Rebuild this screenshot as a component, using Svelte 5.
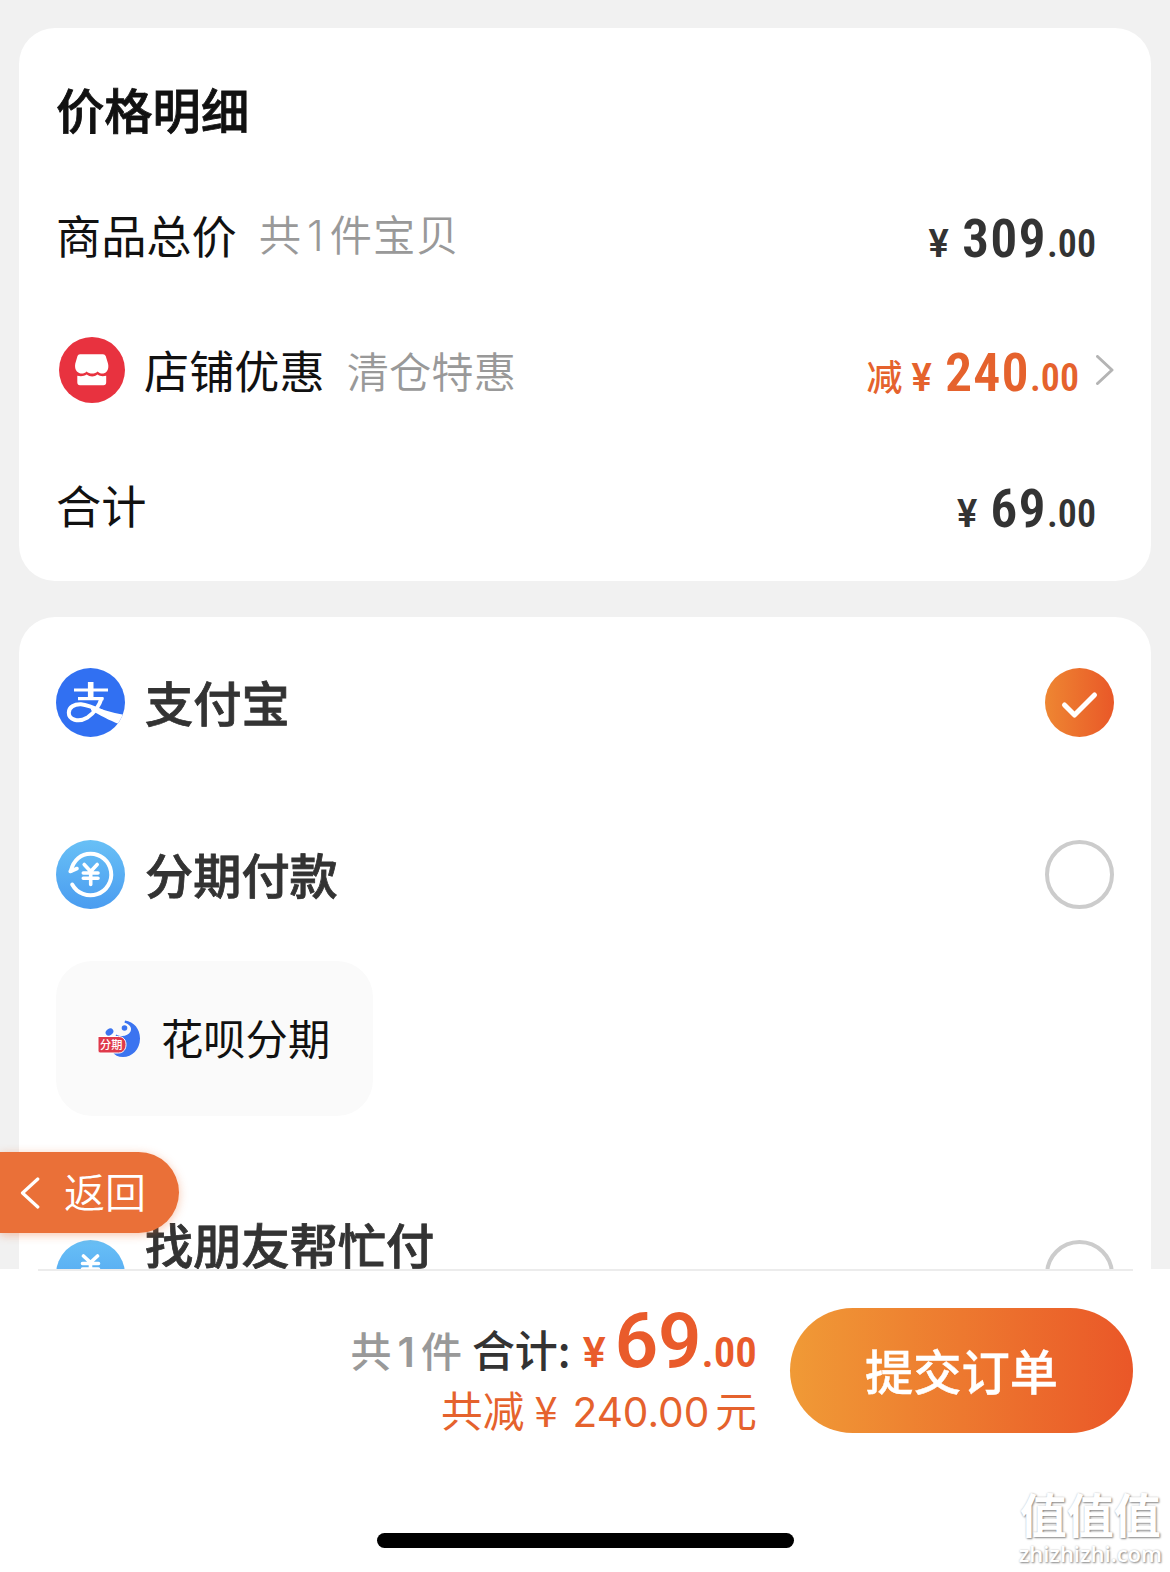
<script>
  let selected = $state("alipay");

  const methods = [
    { id: "alipay", name: "支付宝" },
    { id: "installment", name: "分期付款" },
    { id: "friend", name: "找朋友帮忙付" },
  ];
</script>

{#snippet price(whole, cents)}
  <span class="yen">¥</span><span class="whole">{whole}</span><span class="cents">.{cents}</span>
{/snippet}

{#snippet coin(loop)}
  <svg class="logo" viewBox="0 0 69 69">
    <defs>
      <linearGradient id="sky" x1="0" y1="0" x2="0" y2="1">
        <stop offset="0" stop-color="#68c0f6" />
        <stop offset="1" stop-color="#4a9cf0" />
      </linearGradient>
    </defs>
    <circle cx="34.5" cy="34.5" r="34.5" fill="url(#sky)" />
    <g fill="none" stroke="#fff" stroke-width="3.6" stroke-linecap="round" stroke-linejoin="round">
      {#if loop}
        <path stroke-width="4" d="M15 30.5C17.5 20 25 13.7 34.5 13.7A20.8 20.8 0 1 1 16.2 44.5" />
        <path d="M14.2 31.5L21 28.5" />
        <path d="M28.2 24.5L34.7 31.5L41.2 24.5M27.3 33H42M27.3 38.3H42M34.7 32V44.5" />
      {:else}
        <path d="M27.5 16L34.5 22.5L41.5 16M26.5 23.5H42.5M26.5 29H42.5M34.5 23V38" />
      {/if}
    </g>
  </svg>
{/snippet}

<div class="page">
  <section class="card detail">
    <h2>价格明细</h2>
    <div class="row">
      <span class="label">商品总价</span>
      <span class="hint wide">共<span class="one">1</span>件宝贝</span>
      <span class="price">{@render price("309", "00")}</span>
    </div>
    <div class="row">
      <svg class="shop" viewBox="0 0 66 66">
        <circle cx="33" cy="33" r="33" fill="#e8323f" />
        <path
          fill="#fff"
          d="M21 17.2H44Q46 17.2 46.7 19L49 26.5C50.3 32 47.8 36 44.5 36.4C42 36.8 40 35.7 38.5 34.4C36 37.2 30.5 37.2 27.6 34.4C26 36 23.8 36.8 21.5 36.4C17.8 35.8 15.2 32 16.3 26.5L18.5 19Q19 17.2 21 17.2Z"
        />
        <path
          fill="#fff"
          d="M18.3 38.7C21 39.4 25 39.5 27.6 37.5C31 40 35.5 40 38.5 37.5C41 39.4 44 39.5 47.2 38.7V45.3Q47.2 48.2 44.5 48.2H21Q18.3 48.2 18.3 45.3Z"
        />
      </svg>
      <span class="label">店铺优惠</span>
      <span class="hint">清仓特惠</span>
      <span class="price off"><span class="minus">减</span>{@render price("240", "00")}</span>
      <svg class="arrow" viewBox="0 0 18 30">
        <path d="M1.5 1.5L16 15L1.5 28.5" fill="none" stroke="#b4b4b4" stroke-width="3" stroke-linecap="round" stroke-linejoin="round" />
      </svg>
    </div>
    <div class="row">
      <span class="label">合计</span>
      <span class="price">{@render price("69", "00")}</span>
    </div>
  </section>

  <section class="card methods">
    {#each methods as method}
      <button class="method {method.id}" onclick={() => (selected = method.id)}>
        {#if method.id === "alipay"}
          <svg class="logo" viewBox="0 0 69 69">
            <defs>
              <clipPath id="disc"><circle cx="34.5" cy="34.5" r="34.5" /></clipPath>
            </defs>
            <circle cx="34.5" cy="34.5" r="34.5" fill="#3170f2" />
            <g clip-path="url(#disc)" fill="none" stroke="#fff">
              <path stroke-width="3.2" d="M18 22H52M22 30.6H47.5" />
              <path stroke-width="5.6" d="M34.7 14V30" />
              <path stroke-width="4" d="M45.8 29.5C43.5 37.5 39 44.5 31 49.8C22 55 12.8 51.5 12.8 44.7C12.8 39 18.5 36 25 36.3C32 36.9 38.5 40 47 44" />
              <path fill="#fff" stroke="none" d="M35 37.4C43 40.4 55 44.5 69 47L63 56C54 52.6 43 46.8 35 42.2Z" />
            </g>
          </svg>
        {:else}
          {@render coin(method.id === "installment")}
        {/if}
        <span class="name">{method.name}</span>
        {#if selected === method.id}
          <svg class="tick" viewBox="0 0 69 69">
            <defs>
              <linearGradient id="warm">
                <stop offset="0" stop-color="#ee8632" />
                <stop offset="1" stop-color="#e95828" />
              </linearGradient>
            </defs>
            <circle cx="34.5" cy="34.5" r="34.5" fill="url(#warm)" />
            <path d="M19.5 37L29.5 47L49.5 27" fill="none" stroke="#fff" stroke-width="5" stroke-linecap="round" stroke-linejoin="round" />
          </svg>
        {:else}
          <span class="radio"></span>
        {/if}
      </button>
      {#if method.id === "installment"}
        <div class="chip">
          <svg class="huabei" viewBox="0 0 43 38">
            <path
              fill="#3b74f0"
              d="M27 0.5C36 1.5 42 9 42 18.5C42 29.5 34 37 25 37C20 37 16.5 35 14.5 32L18 14.5C24 17.5 30 16 32.5 11.5C34.5 7.5 31 4 26.5 2.8Z"
            />
            <ellipse cx="11.5" cy="12" rx="4.2" ry="3.2" transform="rotate(-38 11.5 12)" fill="#3b74f0" />
            <circle cx="26.5" cy="8" r="2.8" fill="#3b74f0" />
            <path d="M0 16.5H20.5C25.2 16.5 28 20 28 24.5C28 29 25.5 33 20.5 33H2Q0 33 0 31Z" fill="#df3a4b" stroke="#fff" stroke-width="1" />
            <text x="2" y="29" font-size="11.2" font-weight="500" fill="#fff">分期</text>
          </svg>
          <span>花呗分期</span>
        </div>
      {/if}
    {/each}
  </section>

  <button class="back">
    <svg viewBox="0 0 20 32">
      <path d="M17.8 2L2.5 16L17.8 30" fill="none" stroke="#fff" stroke-width="3.2" stroke-linecap="round" stroke-linejoin="round" />
    </svg>
    <span>返回</span>
  </button>

  <footer>
    <div class="bar">
      <div class="summary">
        <p class="total">
          <span class="count">共<span class="one">1</span>件</span>
          <span class="sum">合计:</span>
          <span class="pay">{@render price("69", "00")}</span>
        </p>
        <p class="saved">共减<span class="y">¥</span><span class="num">240.00</span>元</p>
      </div>
      <button class="submit">提交订单</button>
    </div>
    <div class="home"></div>
    <div class="watermark">
      <b>值值值</b>
      <span>zhizhizhi.com</span>
    </div>
  </footer>
</div>

<style>
  :global(body) {
    background: #f1f1f1;
  }

  * {
    box-sizing: border-box;
  }

  .page {
    position: relative;
    display: flex;
    flex-direction: column;
    gap: 36px;
    width: 1170px;
    height: 1572px;
    padding: 28px 19px 0 19px;
    overflow: hidden;
    background: #f1f1f1;
    color: #111;
    font-family: "Noto Sans CJK SC", sans-serif;
  }

  button {
    padding: 0;
    border: 0;
    background: none;
    color: inherit;
    font: inherit;
    text-align: left;
  }

  h2,
  p {
    margin: 0;
  }

  .card {
    flex: none;
    padding: 0 37px;
    border-radius: 36px;
    background: #fff;
  }

  .detail {
    height: 553px;
  }

  h2 {
    height: 139px;
    padding-top: 20px;
    font-size: 48.3px;
    font-weight: 500;
    line-height: 120px;
    -webkit-text-stroke: 0.8px;
  }

  .row {
    display: flex;
    align-items: center;
    height: 135px;
  }

  .label {
    font-size: 45.2px;
    line-height: 66px;
  }

  .hint {
    margin-left: 22px;
    color: #999;
    font-size: 42.3px;
    font-weight: 350;
    line-height: 66px;
  }

  .hint.wide {
    letter-spacing: 1px;
  }

  .one {
    margin: 0 5px;
    font-family: Inter, sans-serif;
  }

  .shop {
    width: 66px;
    height: 66px;
    margin: 0 19px 0 3px;
  }

  .price {
    display: flex;
    align-items: baseline;
    margin-top: 13px;
    margin-left: auto;
    margin-right: 18px;
    color: #333;
    font-family: Roboto, "Noto Sans CJK SC", sans-serif;
    font-stretch: 87%;
    font-weight: 650;
    line-height: 66px;
  }

  .price .yen {
    margin-right: 13px;
    font-size: 38px;
    font-stretch: 100%;
    font-weight: 600;
  }

  .price .whole {
    font-size: 54px;
    letter-spacing: 1.2px;
  }

  .price .cents {
    font-size: 38px;
  }

  .off {
    margin-right: 17px;
    color: #e5622d;
  }

  .minus {
    margin-right: 9px;
    font-size: 36px;
    font-weight: 500;
  }

  .arrow {
    width: 18px;
    height: 30px;
  }

  .methods {
    height: 700px;
  }

  .method {
    display: flex;
    align-items: center;
    width: 100%;
    height: 172px;
    padding-bottom: 2px;
  }

  .logo {
    flex: none;
    width: 69px;
    height: 69px;
  }

  .name {
    margin-left: 20px;
    padding-bottom: 3px;
    color: #333;
    font-size: 48.2px;
    font-weight: 500;
    line-height: 70px;
    -webkit-text-stroke: 0.8px;
  }

  .tick,
  .radio {
    flex: none;
    width: 69px;
    height: 69px;
    margin-left: auto;
  }

  .radio {
    border: 4px solid #ccc;
    border-radius: 50%;
  }

  .friend {
    height: 317px;
    padding-bottom: 0;
  }

  .friend .name {
    align-self: flex-start;
    margin-top: 92px;
  }

  .chip {
    display: flex;
    align-items: center;
    width: 317px;
    height: 155px;
    padding-left: 42px;
    border-radius: 36px;
    background: #fafafa;
    font-size: 42.3px;
  }

  .chip span {
    padding-bottom: 5px;
  }

  .huabei {
    width: 43px;
    height: 38px;
    margin-right: 20px;
    overflow: visible;
  }

  .back {
    position: absolute;
    top: 1152px;
    left: 0;
    display: flex;
    align-items: center;
    width: 179px;
    height: 81px;
    padding-left: 20px;
    border-radius: 0 41px 41px 0;
    background: #ea7038;
    box-shadow: 0 2px 10px rgba(234, 112, 56, 0.4);
    color: #fff;
    font-size: 41px;
    font-weight: 350;
    line-height: 77px;
  }

  .back span {
    padding-bottom: 4px;
  }

  .back svg {
    width: 20px;
    height: 32px;
    margin-right: 24px;
  }

  footer {
    position: absolute;
    right: 0;
    bottom: 0;
    left: 0;
    height: 303px;
    background: #fff;
  }

  .bar {
    display: flex;
    justify-content: flex-end;
    height: 164px;
    margin: 0 37px 0 38px;
    padding-top: 37px;
    border-top: 2px solid #ececec;
  }

  .summary {
    display: flex;
    flex-direction: column;
    align-items: flex-end;
    margin-top: -3px;
    margin-right: 33px;
  }

  .total {
    display: flex;
    align-items: baseline;
    height: 74px;
    line-height: 72px;
  }

  .count {
    margin-right: 10px;
    color: #999;
    font-size: 41px;
    font-weight: 500;
  }

  .count .one {
    margin: 0 6px;
    font-weight: 600;
  }

  .sum {
    margin-right: 12px;
    color: #333;
    font-size: 43px;
    font-weight: 500;
  }

  .pay {
    display: flex;
    align-items: baseline;
    color: #e95b2b;
    font-family: Roboto, sans-serif;
    font-stretch: 90%;
    font-weight: 650;
  }

  .pay .yen {
    margin-right: 9px;
    font-size: 43px;
    font-stretch: 100%;
    font-weight: 600;
  }

  .pay .whole {
    font-size: 76px;
  }

  .pay .cents {
    font-size: 43px;
    font-stretch: 84%;
  }

  .saved {
    display: flex;
    align-items: baseline;
    color: #e5622d;
    font-size: 41.7px;
    line-height: 60px;
  }

  .saved .y {
    margin: 0 15px 0 10px;
  }

  .saved .num {
    margin-right: 6px;
    font-family: Inter, sans-serif;
    font-size: 40.6px;
  }

  .submit {
    width: 343px;
    height: 125px;
    padding-bottom: 4px;
    border-radius: 63px;
    background: linear-gradient(90deg, #f09a36, #ea5728);
    color: #fff;
    font-size: 48.3px;
    font-weight: 500;
    text-align: center;
    -webkit-text-stroke: 0.4px;
  }

  .home {
    width: 417px;
    height: 15px;
    margin: 100px 0 0 377px;
    border-radius: 8px;
    background: #000;
  }

  .watermark {
    position: absolute;
    right: 8px;
    bottom: 7px;
    display: flex;
    flex-direction: column;
    align-items: center;
    color: #fff;
    text-shadow: 1px 1px 2px #888, 0 0 2px #ccc;
  }

  .watermark b {
    font-size: 47px;
    line-height: 56px;
  }

  .watermark span {
    font-family: "Open Sans", sans-serif;
    font-size: 22px;
    font-weight: 600;
    line-height: 24px;
  }
</style>
